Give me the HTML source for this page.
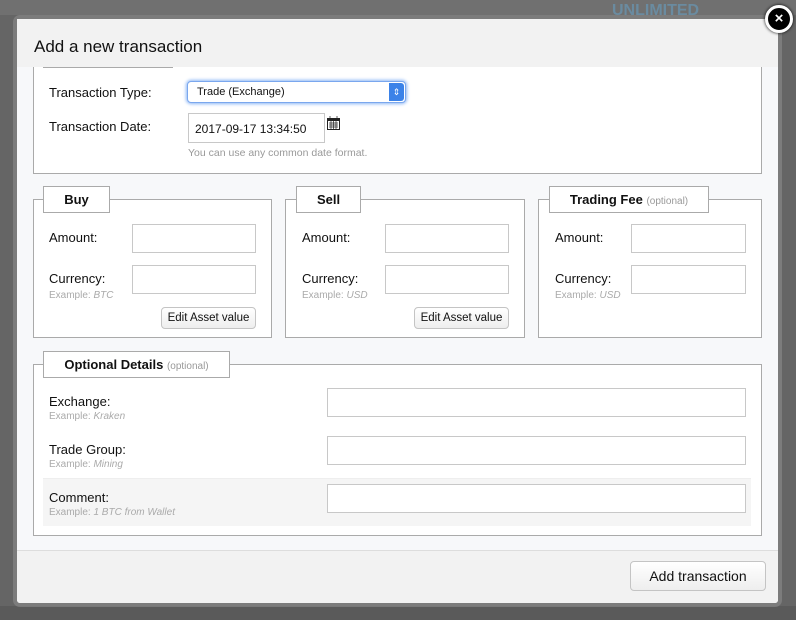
<!DOCTYPE html>
<html><head><meta charset="utf-8"><style>
*{margin:0;padding:0;box-sizing:border-box}
body{width:796px;height:620px;overflow:hidden;background:#656565;font-family:"Liberation Sans",Arial,sans-serif;color:#111;position:relative}
.a{position:absolute}
.modal{left:17px;top:19px;width:761px;height:584px;background:#f7f8fa;border-radius:3px;box-shadow:0 0 0 4px rgba(140,140,140,.6)}
.hdr{left:17px;top:19px;width:761px;height:48px;background:#f2f2f2}
.fs{border:1px solid #aaa;background:#fff}
.lg{border:1px solid #aaa;background:#fff;font-weight:bold;font-size:13px;text-align:center;line-height:25px}
.lg span{font-weight:normal;font-size:10px;color:#999}
.lbl{font-size:13px}
.inp{border:1px solid #c8c8c8;background:#fff}
.ex{font-size:10px;color:#aaa}
.ex i{font-style:italic}
.btn{border:1px solid #c4c4c4;border-radius:4px;background:linear-gradient(#fff,#eee);font-size:11.5px;text-align:center;line-height:20px}
</style></head><body>
<div class="a" style="left:0;top:0;width:796px;height:15px;background:#707070"></div>
<div class="a" style="left:612px;top:2px;font-size:16px;font-weight:bold;color:#6a8ba0">UNLIMITED</div>
<div class="a" style="left:0;top:606px;width:796px;height:14px;background:#5a5a5a"></div>
<div class="a modal"></div>
<div class="a hdr"></div>
<div class="a" style="left:34px;top:37px;font-size:17px">Add a new transaction</div>

<div class="a fs" style="left:33px;top:67px;width:729px;height:107px;border-top:none"></div>
<div class="a" style="left:43px;top:67px;width:130px;height:1px;background:#aaa"></div>
<div class="a lbl" style="left:49px;top:85px">Transaction Type:</div>
<div class="a" style="left:187px;top:81px;width:219px;height:22px;border:1px solid #7aa7ee;border-radius:4px;box-shadow:0 0 3px 1px #8cb6f5;background:#fff;font-size:11px;padding:4px 0 0 9px">Trade (Exchange)</div>
<div class="a" style="left:389px;top:83px;width:15px;height:18px;background:#3b82e8;border-radius:0 3px 3px 0;color:#fff;font-size:9px;text-align:center;line-height:18px">⇕</div>
<div class="a lbl" style="left:49px;top:119px">Transaction Date:</div>
<div class="a inp" style="left:188px;top:113px;width:137px;height:30px;font-size:12px;padding:8px 0 0 6px">2017-09-17 13:34:50</div>
<svg class="a" style="left:327px;top:116px" width="13" height="14"><rect x="0.5" y="2.5" width="12" height="11" fill="none" stroke="#222"/><rect x="0" y="2" width="13" height="3" fill="#222"/><path d="M3 0v3M10 0v3M2 7h9M2 9h9M2 11h9M4 5v8M6.5 5v8M9 5v8" stroke="#222" stroke-width=".7"/></svg>
<div class="a" style="left:188px;top:147px;font-size:10.5px;color:#999">You can use any common date format.</div>

<!-- Buy -->
<div class="a fs" style="left:33px;top:199px;width:239px;height:139px"></div>
<div class="a lg" style="left:43px;top:186px;width:67px;height:27px">Buy</div>
<div class="a lbl" style="left:49px;top:230px">Amount:</div>
<div class="a inp" style="left:132px;top:224px;width:124px;height:29px"></div>
<div class="a lbl" style="left:49px;top:271px">Currency:</div>
<div class="a inp" style="left:132px;top:265px;width:124px;height:29px"></div>
<div class="a ex" style="left:49px;top:290px">Example: <i>BTC</i></div>
<div class="a btn" style="left:161px;top:307px;width:95px;height:22px">Edit Asset value</div>

<!-- Sell -->
<div class="a fs" style="left:285px;top:199px;width:240px;height:139px"></div>
<div class="a lg" style="left:296px;top:186px;width:65px;height:27px">Sell</div>
<div class="a lbl" style="left:302px;top:230px">Amount:</div>
<div class="a inp" style="left:385px;top:224px;width:124px;height:29px"></div>
<div class="a lbl" style="left:302px;top:271px">Currency:</div>
<div class="a inp" style="left:385px;top:265px;width:124px;height:29px"></div>
<div class="a ex" style="left:302px;top:290px">Example: <i>USD</i></div>
<div class="a btn" style="left:414px;top:307px;width:95px;height:22px">Edit Asset value</div>

<!-- Fee -->
<div class="a fs" style="left:538px;top:199px;width:224px;height:139px"></div>
<div class="a lg" style="left:549px;top:186px;width:160px;height:27px">Trading Fee <span>(optional)</span></div>
<div class="a lbl" style="left:555px;top:230px">Amount:</div>
<div class="a inp" style="left:631px;top:224px;width:115px;height:29px"></div>
<div class="a lbl" style="left:555px;top:271px">Currency:</div>
<div class="a inp" style="left:631px;top:265px;width:115px;height:29px"></div>
<div class="a ex" style="left:555px;top:290px">Example: <i>USD</i></div>

<!-- Optional -->
<div class="a fs" style="left:33px;top:364px;width:729px;height:172px"></div>
<div class="a lg" style="left:43px;top:351px;width:187px;height:27px">Optional Details <span>(optional)</span></div>
<div class="a lbl" style="left:49px;top:394px">Exchange:</div>
<div class="a ex" style="left:49px;top:411px">Example: <i>Kraken</i></div>
<div class="a inp" style="left:327px;top:388px;width:419px;height:29px"></div>
<div class="a lbl" style="left:49px;top:442px">Trade Group:</div>
<div class="a ex" style="left:49px;top:459px">Example: <i>Mining</i></div>
<div class="a inp" style="left:327px;top:436px;width:419px;height:29px"></div>
<div class="a" style="left:43px;top:478px;width:708px;height:48px;background:#f5f5f5;border-top:1px solid #eee"></div>
<div class="a lbl" style="left:49px;top:490px">Comment:</div>
<div class="a ex" style="left:49px;top:507px">Example: <i>1 BTC from Wallet</i></div>
<div class="a inp" style="left:327px;top:484px;width:419px;height:29px"></div>

<!-- footer -->
<div class="a" style="left:17px;top:550px;width:761px;height:53px;background:#f2f2f2;border-top:1px solid #ddd;border-radius:0 0 3px 3px"></div>
<div class="a btn" style="left:630px;top:561px;width:136px;height:30px;font-size:14px;line-height:28px">Add transaction</div>

<div class="a" style="left:765px;top:5px;width:28px;height:28px;border-radius:50%;background:#000;border:3px solid #fff;box-shadow:0 0 3px #000;color:#fff;font-weight:bold;font-size:15px;text-align:center;line-height:21px">×</div>
</body></html>
